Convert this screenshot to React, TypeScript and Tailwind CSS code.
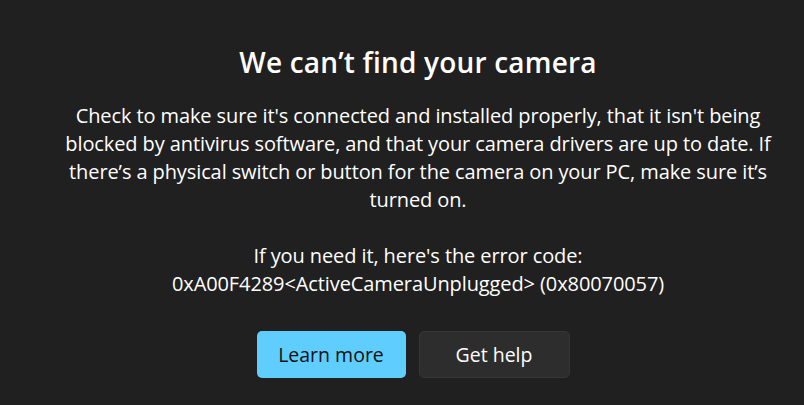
export default function App() {
  return (
    <div
      className="w-[804px] h-[405px] bg-[#202020] text-white flex flex-col items-center pl-[32px] pt-[42px] overflow-hidden"
      style={{ fontFamily: '"Open Sans", "Noto Sans", sans-serif' }}
    >
      <h1 className="text-[28px] leading-[40px] font-semibold tracking-[0.2px]">We can’t find your camera</h1>
      <div className="mt-[20px] text-center text-[20px] leading-[28px] tracking-[-0.1px] text-white">
        <p>
          Check to make sure it's connected and installed properly, that it isn't being
          <br />
          blocked by antivirus software, and that your camera drivers are up to date. If
          <br />
          there’s a physical switch or button for the camera on your PC, make sure it’s
          <br />
          turned on.
        </p>
        <p className="mt-[28px]">
          If you need it, here's the error code:
          <br />
          0xA00F4289&lt;ActiveCameraUnplugged&gt; (0x80070057)
        </p>
      </div>
      <div className="mt-[33px] mr-[10px] flex gap-[13px]">
        <button className="w-[149px] h-[47px] rounded-[5px] bg-[#60cdff] text-[#111] text-[19.5px]">
          Learn more
        </button>
        <button className="w-[151px] h-[47px] rounded-[5px] bg-[#2d2d2d] border border-[#363636] text-white text-[19.5px]">
          Get help
        </button>
      </div>
    </div>
  );
}
